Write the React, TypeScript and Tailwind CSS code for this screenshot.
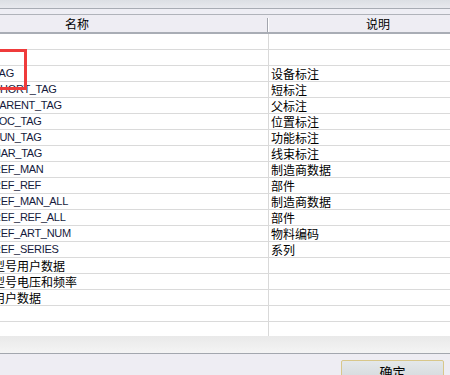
import React from 'react';

type Row = { name: string; desc: string; cjk?: boolean };

const ROWS: Row[] = [
  { name: '', desc: '' },
  { name: '', desc: '' },
  { name: 'TAG', desc: '设备标注' },
  { name: 'SHORT_TAG', desc: '短标注' },
  { name: 'PARENT_TAG', desc: '父标注' },
  { name: 'LOC_TAG', desc: '位置标注' },
  { name: 'FUN_TAG', desc: '功能标注' },
  { name: 'HAR_TAG', desc: '线束标注' },
  { name: 'REF_MAN', desc: '制造商数据' },
  { name: 'REF_REF', desc: '部件' },
  { name: 'REF_MAN_ALL', desc: '制造商数据' },
  { name: 'REF_REF_ALL', desc: '部件' },
  { name: 'REF_ART_NUM', desc: '物料编码' },
  { name: 'REF_SERIES', desc: '系列' },
  { name: '型号用户数据', desc: '', cjk: true },
  { name: '型号电压和频率', desc: '', cjk: true },
  { name: '用户数据', desc: '', cjk: true },
  { name: '', desc: '' },
  { name: '', desc: '' },
];

const LATIN = "font-['Liberation_Sans','Noto_Sans_CJK_SC',sans-serif]";
const CJK = "font-['Noto_Sans_CJK_SC',sans-serif]";

export default function App() {
  return (
    <div className="relative w-[450px] h-[375px] overflow-hidden bg-[#eeedf3] select-none">
      {/* top strip */}
      <div className="h-[8px] bg-gradient-to-b from-[#dcdfe4] to-[#e8e9ee]" />
      <div className="h-px bg-[#a8acb4]" />
      <div className="h-[5px] bg-[#eeeef4]" />
      <div className="h-px bg-[#b0b3ba]" />

      {/* header */}
      <div className={`flex h-[17px] bg-[#eeedf3] text-[12px] leading-[17px] text-black ${CJK}`}>
        <div className="w-[267px] shrink-0">
          <span className="ml-[65px]">名称</span>
        </div>
        <div className="flex flex-col shrink-0">
          <div className="h-[3px]" />
          <div className="flex flex-1">
            <div className="w-px bg-[#a2a5ad]" />
            <div className="w-px bg-white" />
          </div>
        </div>
        <div className="flex-1">
          <span className="ml-[97px]">说明</span>
        </div>
      </div>
      <div className="h-[2px] bg-[#a9adb5]" />

      {/* body */}
      <div className="h-[302px] overflow-hidden bg-white">
        {ROWS.map((r, i) => (
          <div key={i} className="flex h-[16px] border-b border-[#dadada]">
            <div className="w-[269px] shrink-0 overflow-hidden border-r border-[#d9d9d9]">
              <div
                className={`ml-[-7px] whitespace-nowrap leading-[15px] ${
                  r.cjk ? `${CJK} text-[12px] text-black` : `${LATIN} text-[11px] tracking-[-0.3px] text-[#151a3c]`
                }`}
              >
                {r.name}
              </div>
            </div>
            <div className={`flex-1 pl-[2px] whitespace-nowrap text-[12px] leading-[15px] text-black ${CJK}`}>
              {r.desc}
            </div>
          </div>
        ))}
      </div>

      {/* horizontal scroll strip */}
      <div className="h-[17px] bg-gradient-to-b from-[#e9e9e9] to-[#f4f4f4]" />
      <div className="h-px bg-[#a3a7ae]" />

      {/* bottom panel */}
      <div className="flex justify-end pt-[6px] pr-[6px]">
        <button
          className={`w-[103px] h-[24px] rounded-[2px] border border-[#d8c78a] bg-gradient-to-b from-[#e4e8ea] to-[#d2d7da] text-[13px] leading-[20px] text-black ${CJK}`}
        >
          确定
        </button>
      </div>

      {/* red highlight box */}
      <div className="absolute left-[-10px] top-[49px] w-[37px] h-[41px] border-[3px] border-[#ef3b3b]" />
    </div>
  );
}
